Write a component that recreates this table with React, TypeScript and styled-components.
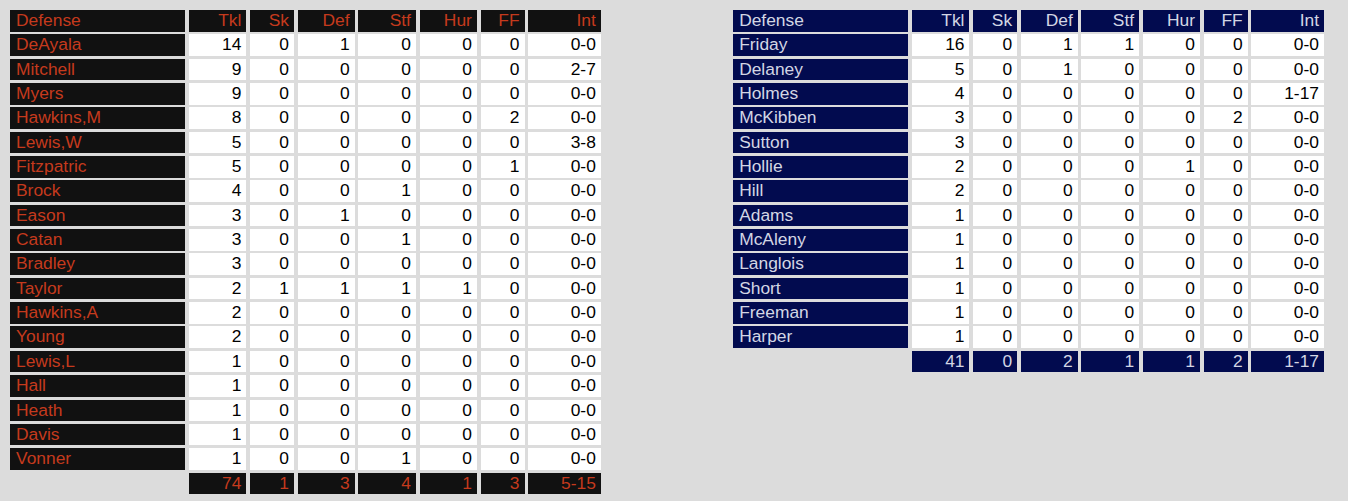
import * as React from 'react';
import styled, { createGlobalStyle } from 'styled-components';

type Row = [string, number, number, number, number, number, number, string];

interface ITeam {
    bg: string;
    fg: string;
    rows: Row[];
    totals: [number, number, number, number, number, number, string];
}

const home: ITeam = {
    bg: '#111111',
    fg: '#c53a1d',
    rows: [
        ['DeAyala', 14, 0, 1, 0, 0, 0, '0-0'],
        ['Mitchell', 9, 0, 0, 0, 0, 0, '2-7'],
        ['Myers', 9, 0, 0, 0, 0, 0, '0-0'],
        ['Hawkins,M', 8, 0, 0, 0, 0, 2, '0-0'],
        ['Lewis,W', 5, 0, 0, 0, 0, 0, '3-8'],
        ['Fitzpatric', 5, 0, 0, 0, 0, 1, '0-0'],
        ['Brock', 4, 0, 0, 1, 0, 0, '0-0'],
        ['Eason', 3, 0, 1, 0, 0, 0, '0-0'],
        ['Catan', 3, 0, 0, 1, 0, 0, '0-0'],
        ['Bradley', 3, 0, 0, 0, 0, 0, '0-0'],
        ['Taylor', 2, 1, 1, 1, 1, 0, '0-0'],
        ['Hawkins,A', 2, 0, 0, 0, 0, 0, '0-0'],
        ['Young', 2, 0, 0, 0, 0, 0, '0-0'],
        ['Lewis,L', 1, 0, 0, 0, 0, 0, '0-0'],
        ['Hall', 1, 0, 0, 0, 0, 0, '0-0'],
        ['Heath', 1, 0, 0, 0, 0, 0, '0-0'],
        ['Davis', 1, 0, 0, 0, 0, 0, '0-0'],
        ['Vonner', 1, 0, 0, 1, 0, 0, '0-0'],
    ],
    totals: [74, 1, 3, 4, 1, 3, '5-15'],
};

const away: ITeam = {
    bg: '#020b4f',
    fg: '#d3d6e4',
    rows: [
        ['Friday', 16, 0, 1, 1, 0, 0, '0-0'],
        ['Delaney', 5, 0, 1, 0, 0, 0, '0-0'],
        ['Holmes', 4, 0, 0, 0, 0, 0, '1-17'],
        ['McKibben', 3, 0, 0, 0, 0, 2, '0-0'],
        ['Sutton', 3, 0, 0, 0, 0, 0, '0-0'],
        ['Hollie', 2, 0, 0, 0, 1, 0, '0-0'],
        ['Hill', 2, 0, 0, 0, 0, 0, '0-0'],
        ['Adams', 1, 0, 0, 0, 0, 0, '0-0'],
        ['McAleny', 1, 0, 0, 0, 0, 0, '0-0'],
        ['Langlois', 1, 0, 0, 0, 0, 0, '0-0'],
        ['Short', 1, 0, 0, 0, 0, 0, '0-0'],
        ['Freeman', 1, 0, 0, 0, 0, 0, '0-0'],
        ['Harper', 1, 0, 0, 0, 0, 0, '0-0'],
    ],
    totals: [41, 0, 2, 1, 1, 2, '1-17'],
};

const columns = ['Tkl', 'Sk', 'Def', 'Stf', 'Hur', 'FF', 'Int'];

const StatTable = ({ team }: { team: ITeam }) => (
    <Board>
        <Label $bg={team.bg} $fg={team.fg}>Defense</Label>
        {columns.map(c => (
            <Dark key={c} $bg={team.bg} $fg={team.fg}>{c}</Dark>
        ))}
        {team.rows.map(row => (
            <React.Fragment key={row[0]}>
                <Label $bg={team.bg} $fg={team.fg}>{row[0]}</Label>
                {row.slice(1).map((v, i) => (
                    <Stat key={i}>{v}</Stat>
                ))}
            </React.Fragment>
        ))}
        <Blank />
        {team.totals.map((v, i) => (
            <Dark key={i} $bg={team.bg} $fg={team.fg}>{v}</Dark>
        ))}
    </Board>
);

export default function App() {
    return (
        <>
            <GlobalStyle />
            <Page>
                <StatTable team={home} />
                <StatTable team={away} />
            </Page>
        </>
    );
}

const GlobalStyle = createGlobalStyle`
    html, body {
        margin: 0;
        padding: 0;
        background: #dcdcdc;
    }
    body {
        font-family: "Liberation Sans", Arial, sans-serif;
    }
`;

const Page = styled('div')`
    display: flex;
    flex-direction: row;
    align-items: flex-start;
    gap: 132.3px;
    padding: 10px;
    min-height: 481px;
    background: #dcdcdc;
`;

const Board = styled('div')`
    display: grid;
    grid-template-columns: 175px 57.7px 44px 57px 57.7px 57.3px 44px 72.7px;
    grid-auto-rows: 21.6px;
    column-gap: 3.65px;
    row-gap: 2.75px;
    font-size: 17.4px;
    line-height: 21.6px;
`;

const Cell = styled('div')`
    padding: 0 5px;
    white-space: nowrap;
    overflow: hidden;
`;

const Label = styled(Cell)<{ $bg: string; $fg: string }>`
    padding-left: 6px;
    text-align: left;
    background: ${p => p.$bg};
    color: ${p => p.$fg};
`;

const Dark = styled(Cell)<{ $bg: string; $fg: string }>`
    text-align: right;
    background: ${p => p.$bg};
    color: ${p => p.$fg};
`;

const Stat = styled(Cell)`
    text-align: right;
    background: #ffffff;
    color: #000000;
`;

const Blank = styled('div')``;
